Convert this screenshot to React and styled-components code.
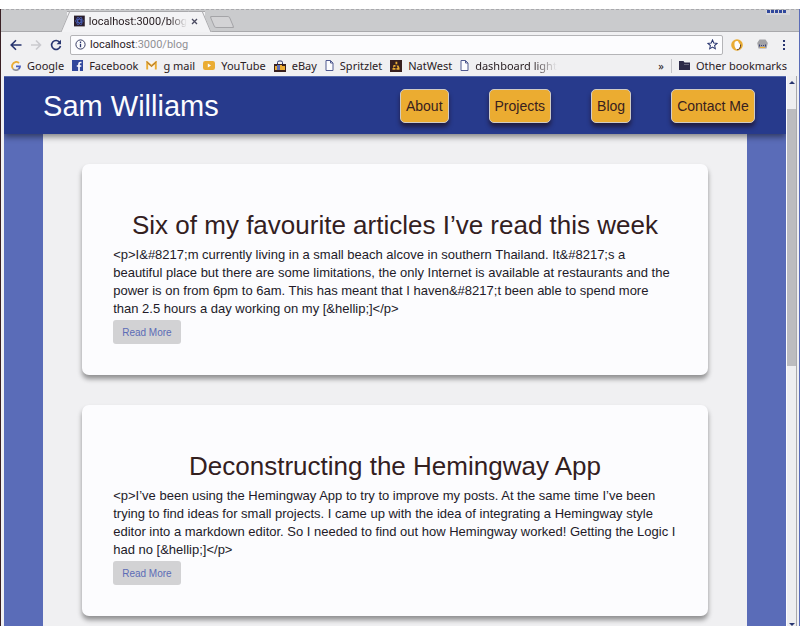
import React from "react";
import styled, { createGlobalStyle } from "styled-components";

const uiFont = '"Noto Sans", "Open Sans", sans-serif';
const addressFont = 'Roboto, "Noto Sans", sans-serif';
const pageFont = '"Liberation Sans", Arial, sans-serif';

const GlobalStyle = createGlobalStyle`
  *, *::before, *::after { box-sizing: border-box; }
  body { margin: 0; background: #ffffff; overflow: hidden; }
  button, input { font: inherit; margin: 0; }
`;

const Desktop = styled.div`
  height: 100vh;
  padding: 9px 0;
  display: flex;
`;

const BrowserWindow = styled.div`
  flex: 1;
  min-width: 0;
  display: flex;
  flex-direction: column;
  border-left: 1px solid #3a2024;
  border-right: 1px solid #5a6cb8;
  background: #f0f0f2;
  font-family: ${uiFont};
  font-size: 11px;
  color: #2a2024;
`;

const TabStrip = styled.div`
  height: 23px;
  flex: none;
  display: flex;
  align-items: flex-end;
  background: #cacbcd;
  border-top: 1px dashed #a9a9ac;
  border-bottom: 1px solid #a9a9ac;
  padding-left: 66px;
`;

const ProfileButton = styled.button`
  align-self: flex-start;
  margin: 0 9px 0 auto;
  padding: 0;
  border: 0;
  background: none;
  svg { display: block; }
`;

const Tab = styled.div`
  position: relative;
  z-index: 1;
  display: flex;
  align-items: center;
  gap: 4px;
  width: 138px;
  height: 21px;
  margin-bottom: -1px;
  padding: 0 7px 2px 7px;
  background: #f3f3f5;
  border-top: 1px solid #a9a9ac;

  &::before,
  &::after {
    content: "";
    position: absolute;
    z-index: -1;
    top: -1px;
    bottom: 0;
    width: 14px;
    background: #f3f3f5;
    border-top: 1px solid #a9a9ac;
  }
  &::before {
    left: -2px;
    border-left: 1px solid #a9a9ac;
    transform: skewX(-23deg);
  }
  &::after {
    right: -2px;
    border-right: 1px solid #a9a9ac;
    transform: skewX(23deg);
  }
`;

const TabTitle = styled.span`
  flex: 1;
  font-family: ${addressFont};
  white-space: nowrap;
  mask-image: linear-gradient(to right, #000 82%, transparent);
`;

const PlainButton = styled.button`
  display: inline-flex;
  align-items: center;
  justify-content: center;
  flex: none;
  padding: 0;
  border: 0;
  background: none;
  color: inherit;
  svg { display: block; }
`;

const NewTab = styled.button`
  width: 20px;
  height: 12px;
  margin: 0 0 3px 7px;
  padding: 0;
  border: 1px solid #a4a4a7;
  border-radius: 2px;
  background: #d3d3d5;
  transform: skewX(23deg);
`;

const Toolbar = styled.div`
  height: 25px;
  flex: none;
  display: flex;
  align-items: center;
  gap: 8px;
  padding: 0 13px 0 9px;
  color: #27346f;
`;

const AddressBar = styled.label`
  flex: 1;
  display: flex;
  align-items: center;
  gap: 4px;
  height: 20px;
  padding: 0 4px;
  background: #fcfcfe;
  border: 1px solid #b4b4b7;
  border-radius: 2px;
`;

const AddressField = styled.div`
  flex: 1;
  position: relative;
  height: 16px;
  line-height: 16px;
  font-family: ${addressFont};
  color: #909095;
`;

const AddressInput = styled.input`
  position: absolute;
  inset: 0;
  width: 100%;
  padding: 0;
  border: 0;
  outline: 0;
  background: none;
  color: #909095;
`;

const Host = styled.span`
  position: absolute;
  left: 0;
  top: 0;
  background: #fcfcfe;
  color: #2a2024;
  pointer-events: none;
`;

const ExtensionGroup = styled.div`
  display: flex;
  gap: 14px;
  align-items: center;
`;

const BookmarkBar = styled.nav`
  height: 19px;
  flex: none;
  display: flex;
  align-items: center;
  padding: 0 12px 2px 10px;
  gap: 8px;
`;

const BookmarkLink = styled.a`
  display: inline-flex;
  align-items: center;
  gap: 6px;
  color: inherit;
  text-decoration: none;
  white-space: nowrap;
  svg { display: block; flex: none; }
  ${(p) => p.$faded && "mask-image: linear-gradient(to right, #000 75%, transparent);"}
`;

const BookmarkEnd = styled.div`
  margin-left: auto;
  display: flex;
  align-items: center;
  gap: 7px;
`;

const Divider = styled.span`
  width: 1px;
  height: 14px;
  background: #c4c4c8;
`;

const Viewport = styled.div`
  flex: 1;
  min-height: 0;
  display: flex;
  margin: 0 2px 0 3px;
`;

const Site = styled.div`
  flex: 1;
  min-width: 0;
  overflow: hidden;
  background: #5a6cb8;
  font-family: ${pageFont};
  border-top: 1px solid #5468ac;
`;

const SiteHeader = styled.header`
  position: relative;
  display: flex;
  align-items: center;
  justify-content: space-between;
  height: 57px;
  padding: 0 4% 0 5%;
  background: #273a8c;
  box-shadow: 0 3px 6px rgba(0, 0, 0, 0.45);
`;

const SiteName = styled.h1`
  margin: 0;
  font-size: 29px;
  line-height: 34px;
  font-weight: 400;
  color: #fcfcfe;
`;

const SiteNav = styled.nav`
  display: flex;
  gap: 40px;
`;

const NavButton = styled.button`
  height: 34px;
  padding: 0 5px;
  border: 1px solid #cfcbc6;
  border-radius: 5px;
  background: #ebac31;
  color: #38201f;
  font-size: 14px;
  white-space: nowrap;
  box-shadow: 0 4px 4px rgba(30, 10, 20, 0.6);
`;

const Panel = styled.main`
  width: 90%;
  min-height: 100%;
  margin: 0 auto;
  padding: 30px 5% 30px;
  display: flex;
  flex-direction: column;
  gap: 30px;
  background: #f0f0f2;
`;

const Card = styled.article`
  flex: none;
  padding: 46px 31px 31px;
  border-radius: 7px;
  background: #fcfcfe;
  color: #33201f;
  box-shadow: 0 4px 5px rgba(0, 0, 0, 0.4);
`;

const CardTitle = styled.h2`
  margin: 0 0 6px;
  text-align: center;
  font-size: 26px;
  line-height: 30px;
  font-weight: 400;
`;

const Excerpt = styled.p`
  margin: 0 0 2px;
  font-size: 13px;
  line-height: 18px;
  color: #221a28;
`;

const ReadMore = styled.button`
  display: block;
  height: 24px;
  padding: 0 9px;
  border: 0;
  border-radius: 3px;
  background: #d2d2d4;
  color: #5c6cb6;
  font-size: 10px;
`;

const Scrollbar = styled.div`
  width: 11px;
  flex: none;
  display: flex;
  flex-direction: column;
  align-items: center;
  background: #eeeef0;
  border-right: 1px solid #a9a9ac;
  border-left: 1px solid #fcfcfe;
`;

const ScrollTrack = styled.div`
  flex: 1;
  align-self: stretch;
  padding-top: 22px;
`;

const ScrollThumb = styled.div`
  height: 50%;
  background: #bcbcbf;
`;

const ScrollArrow = styled.span`
  flex: none;
  margin: ${(p) => (p.$down ? "0" : "5px 0 3px")};
  border: 3px solid transparent;
  border-top-width: ${(p) => (p.$down ? "3px" : "0")};
  border-bottom-width: ${(p) => (p.$down ? "0" : "3px")};
  border-top-color: ${(p) => (p.$down ? "#27346f" : "transparent")};
  border-bottom-color: ${(p) => (p.$down ? "transparent" : "#27346f")};
`;

const ProfileIcon = () => (
  <svg width="24" height="5" viewBox="0 0 24 5">
    <rect width="24" height="5" fill="#d6d6d9" />
    <path d="M1 1.5h19" stroke="#30479c" strokeWidth="3" strokeDasharray="3 1" />
  </svg>
);

const ReactIcon = () => (
  <svg width="12" height="12" viewBox="0 0 12 12">
    <rect width="12" height="12" fill="#2b1f2d" />
    <g fill="none" stroke="#4a60bd" strokeWidth="0.9">
      <ellipse cx="6" cy="6" rx="4.5" ry="1.8" />
      <ellipse cx="6" cy="6" rx="4.5" ry="1.8" transform="rotate(60 6 6)" />
      <ellipse cx="6" cy="6" rx="4.5" ry="1.8" transform="rotate(120 6 6)" />
    </g>
  </svg>
);

const CloseIcon = () => (
  <svg width="7" height="7" viewBox="0 0 7 7">
    <path d="M1 1l5 5M6 1L1 6" stroke="#4a4a60" strokeWidth="1.3" />
  </svg>
);

const ArrowIcon = ({ forward }) => (
  <svg width="12" height="12" viewBox="0 0 12 12">
    <path
      d={forward ? "M1 6h10M6 1.5L10.5 6L6 10.5" : "M11.5 6H1.5M6 1.2L1.2 6L6 10.8"}
      fill="none"
      stroke={forward ? "#cacace" : "#27346f"}
      strokeWidth="1.6"
    />
  </svg>
);

const ReloadIcon = () => (
  <svg width="12" height="12" viewBox="0 0 12 12">
    <path d="M9.8 3.4A4.5 4.5 0 1 0 10.5 7" fill="none" stroke="#27346f" strokeWidth="1.6" />
    <path d="M11 0.8v4.4H6.6z" fill="#27346f" />
  </svg>
);

const InfoIcon = () => (
  <svg width="11" height="11" viewBox="0 0 11 11">
    <circle cx="5.5" cy="5.5" r="4.6" fill="none" stroke="#3a3f66" />
    <path d="M5.5 4.8v3.4M5.5 2.6v1.3" stroke="#27346f" strokeWidth="1.3" />
  </svg>
);

const StarIcon = () => (
  <svg width="11" height="11" viewBox="0 0 12 12">
    <path
      d="M6 1l1.4 3.4 3.6.3-2.7 2.4.8 3.6L6 8.8l-3.1 1.9.8-3.6L1 4.7l3.6-.3z"
      fill="none"
      stroke="#27346f"
      strokeWidth="1.1"
    />
  </svg>
);

const HoneyIcon = () => (
  <svg width="12" height="12" viewBox="0 0 12 12">
    <circle cx="6" cy="6" r="5.8" fill="#eaac33" />
    <path d="M3.8 3C5.5 1.5 7.5 1.8 7.8 4l1.5 1.5C9.3 8 8.5 10 6.5 10.8 4 10 2.8 6 3.8 3z" fill="#fcfcfe" />
    <path d="M6 10.8C8.5 10.5 9.8 8.5 9.6 5.5" fill="none" stroke="#4a3025" strokeWidth="0.9" />
  </svg>
);

const GhostIcon = () => (
  <svg width="11" height="11" viewBox="0 0 11 11">
    <path d="M2.5 0.5h6L10.8 4 9.5 9.5H1.5L0.2 4z" fill="#a2a2a6" />
    <path d="M2.5 5.5v2M4.5 6v1M6.5 6v1M8.5 5.5v2" stroke="#3b4175" />
    <path d="M3 8.5h5" stroke="#eaac33" />
  </svg>
);

const MenuIcon = () => (
  <svg width="4" height="12" viewBox="0 0 4 12" fill="#27346f">
    <rect x="1" y="1" width="2" height="2" />
    <rect x="1" y="5" width="2" height="2" />
    <rect x="1" y="9" width="2" height="2" />
  </svg>
);

const GoogleIcon = () => (
  <svg width="10" height="10" viewBox="0 0 10 10" fill="none" strokeWidth="1.8">
    <path d="M8 2A4 4 0 0 0 1.500 3.500A4 4 0 0 0 2 7.800" stroke="#eaac33" />
    <path d="M2 7.8A4 4 0 0 0 7.5 8.2" stroke="#8d8f98" />
    <path d="M5 5.3h4C9 6.8 8.5 7.6 7.5 8.2" stroke="#4a60bd" />
  </svg>
);

const FacebookIcon = () => (
  <svg width="11" height="11" viewBox="0 0 11 11">
    <rect width="11" height="11" fill="#30479c" />
    <path d="M9.5 2.5H8.5Q7 2.5 7 4v7M4.8 6H9.3" fill="none" stroke="#fcfcfe" strokeWidth="1.7" />
  </svg>
);

const MailIcon = () => (
  <svg width="11" height="9" viewBox="0 0 11 9">
    <rect x="1" y="1" width="9" height="7" fill="#f8f4ee" />
    <path d="M1.2 8.5V1.2L5.5 5 9.8 1.2V8.5" fill="none" stroke="#eaac33" strokeWidth="1.9" />
    <path d="M0.5 0.8L5.5 5.2 10.5 0.8" fill="none" stroke="#8c5c38" strokeWidth="0.7" />
  </svg>
);

const YouTubeIcon = () => (
  <svg width="12" height="9" viewBox="0 0 12 9">
    <rect width="12" height="9" rx="2.2" fill="#eaac33" />
    <path d="M4.8 2.5v4L8 4.5z" fill="#fcfcfe" />
  </svg>
);

const BagIcon = () => (
  <svg width="12" height="12" viewBox="0 0 12 12">
    <path d="M3.5 4V2.5Q3.5 1 5 1h2q1.5 0 1.5 1.5V4" fill="none" stroke="#27346f" />
    <rect y="4" width="12" height="8" fill="#38201f" />
    <path d="M1 6h2v4H1zM8 6h3v4H8z" fill="#eaac33" />
    <path d="M3 5h3v5H3z" fill="#5a6cb8" />
    <path d="M6 5h2v5H6z" fill="#eaac33" />
  </svg>
);

const PageIcon = () => (
  <svg width="9" height="11" viewBox="0 0 9 11">
    <path d="M1 0.5h4.5L8 3v7.5H1z" fill="#fcfcfe" stroke="#505a90" />
    <path d="M5.5 0.5V3H8" fill="none" stroke="#505a90" />
  </svg>
);

const NatWestIcon = () => (
  <svg width="12" height="12" viewBox="0 0 12 12">
    <rect width="12" height="12" fill="#38201f" />
    <path
      d="M5.5 1.8h1.8v2.5H5.5zM3.5 5h2v1.8H4.2L3.8 7.5H3zM2.5 8h3v1.7h-3zM6.5 5.5h2L9.5 8v1.7h-3V8h1.2z"
      fill="#eaac33"
    />
  </svg>
);

const FolderIcon = () => (
  <svg width="11" height="9" viewBox="0 0 11 9">
    <path d="M0 0h4.5l1 1.5H11V9H0z" fill="#2c2a48" />
    <path d="M5 3.5h5" stroke="#77778a" strokeWidth="0.8" />
  </svg>
);

const bookmarks = [
  { label: "Google", Icon: GoogleIcon },
  { label: "Facebook", Icon: FacebookIcon },
  { label: "g mail", Icon: MailIcon },
  { label: "YouTube", Icon: YouTubeIcon },
  { label: "eBay", Icon: BagIcon },
  { label: "Spritzlet", Icon: PageIcon },
  { label: "NatWest", Icon: NatWestIcon },
  { label: "dashboard light", Icon: PageIcon, faded: true },
];

const sections = ["About", "Projects", "Blog", "Contact Me"];

const posts = [
  {
    title: "Six of my favourite articles I’ve read this week",
    excerpt:
      "<p>I&#8217;m currently living in a small beach alcove in southern Thailand. It&#8217;s a beautiful place but there are some limitations, the only Internet is available at restaurants and the power is on from 6pm to 6am. This has meant that I haven&#8217;t been able to spend more than 2.5 hours a day working on my [&hellip;]</p>",
  },
  {
    title: "Deconstructing the Hemingway App",
    excerpt:
      "<p>I’ve been using the Hemingway App to try to improve my posts. At the same time I’ve been trying to find ideas for small projects. I came up with the idea of integrating a Hemingway style editor into a markdown editor. So I needed to find out how Hemingway worked! Getting the Logic I had no [&hellip;]</p>",
  },
];

export default function App() {
  return (
    <Desktop>
      <GlobalStyle />
      <BrowserWindow>
        <TabStrip>
          <Tab>
            <ReactIcon />
            <TabTitle>localhost:3000/blog</TabTitle>
            <PlainButton aria-label="Close tab"><CloseIcon /></PlainButton>
          </Tab>
          <NewTab aria-label="New tab" />
          <ProfileButton aria-label="Profile"><ProfileIcon /></ProfileButton>
        </TabStrip>
        <Toolbar>
          <PlainButton aria-label="Back"><ArrowIcon /></PlainButton>
          <PlainButton aria-label="Forward"><ArrowIcon forward /></PlainButton>
          <PlainButton aria-label="Reload"><ReloadIcon /></PlainButton>
          <AddressBar>
            <InfoIcon />
            <AddressField>
              <AddressInput aria-label="Address" defaultValue="localhost:3000/blog" />
              <Host aria-hidden="true">localhost</Host>
            </AddressField>
            <PlainButton aria-label="Bookmark this page"><StarIcon /></PlainButton>
          </AddressBar>
          <ExtensionGroup>
            <PlainButton aria-label="Honey"><HoneyIcon /></PlainButton>
            <PlainButton aria-label="Ghost extension"><GhostIcon /></PlainButton>
            <PlainButton aria-label="Menu"><MenuIcon /></PlainButton>
          </ExtensionGroup>
        </Toolbar>
        <BookmarkBar>
          {bookmarks.map(({ label, Icon, faded }) => (
            <BookmarkLink key={label} href="#" $faded={faded}>
              <Icon />
              {label}
            </BookmarkLink>
          ))}
          <BookmarkEnd>
            <PlainButton aria-label="More bookmarks">»</PlainButton>
            <Divider />
            <BookmarkLink href="#">
              <FolderIcon />
              Other bookmarks
            </BookmarkLink>
          </BookmarkEnd>
        </BookmarkBar>
        <Viewport>
          <Site>
            <SiteHeader>
              <SiteName>Sam Williams</SiteName>
              <SiteNav>
                {sections.map((s) => (
                  <NavButton key={s}>{s}</NavButton>
                ))}
              </SiteNav>
            </SiteHeader>
            <Panel>
              {posts.map((post) => (
                <Card key={post.title}>
                  <CardTitle>{post.title}</CardTitle>
                  <Excerpt>{post.excerpt}</Excerpt>
                  <ReadMore>Read More</ReadMore>
                </Card>
              ))}
            </Panel>
          </Site>
          <Scrollbar>
            <ScrollArrow />
            <ScrollTrack><ScrollThumb /></ScrollTrack>
            <ScrollArrow $down />
          </Scrollbar>
        </Viewport>
      </BrowserWindow>
    </Desktop>
  );
}
